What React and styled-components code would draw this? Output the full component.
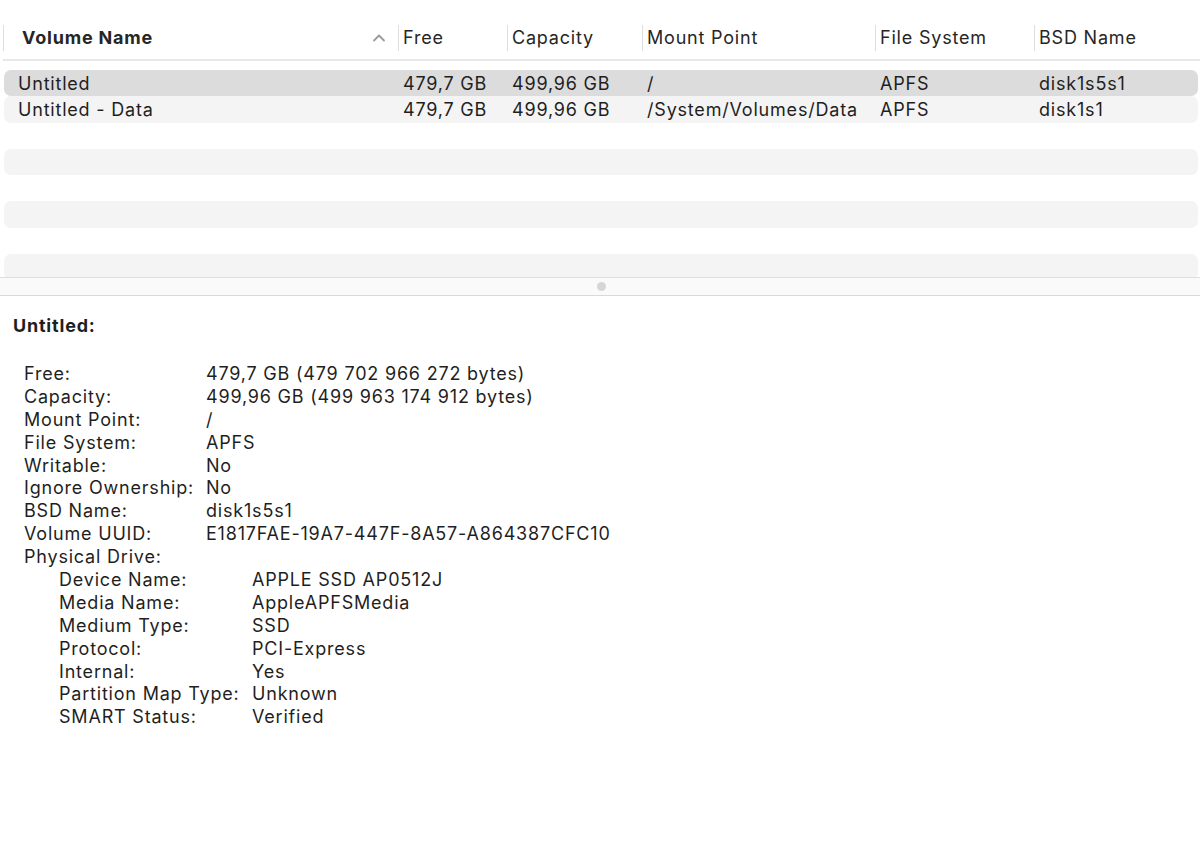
import styled, { createGlobalStyle } from 'styled-components'

const columns = [
  { key: 'name', label: 'Volume Name', sorted: true },
  { key: 'free', label: 'Free' },
  { key: 'capacity', label: 'Capacity' },
  { key: 'mount', label: 'Mount Point' },
  { key: 'fs', label: 'File System' },
  { key: 'bsd', label: 'BSD Name' },
]

const volumes = [
  { name: 'Untitled', free: '479,7 GB', capacity: '499,96 GB', mount: '/', fs: 'APFS', bsd: 'disk1s5s1' },
  { name: 'Untitled - Data', free: '479,7 GB', capacity: '499,96 GB', mount: '/System/Volumes/Data', fs: 'APFS', bsd: 'disk1s1' },
]

const details = [
  ['Free:', '479,7 GB (479 702 966 272 bytes)'],
  ['Capacity:', '499,96 GB (499 963 174 912 bytes)'],
  ['Mount Point:', '/'],
  ['File System:', 'APFS'],
  ['Writable:', 'No'],
  ['Ignore Ownership:', 'No'],
  ['BSD Name:', 'disk1s5s1'],
  ['Volume UUID:', 'E1817FAE-19A7-447F-8A57-A864387CFC10'],
]

const drive = [
  ['Device Name:', 'APPLE SSD AP0512J'],
  ['Media Name:', 'AppleAPFSMedia'],
  ['Medium Type:', 'SSD'],
  ['Protocol:', 'PCI-Express'],
  ['Internal:', 'Yes'],
  ['Partition Map Type:', 'Unknown'],
  ['SMART Status:', 'Verified'],
]

const EMPTY_ROWS = 6

export default function App() {
  return (
    <>
      <GlobalStyle />
      <Window>
        <TableArea>
          <HeaderRow>
            {columns.map((c, i) => (
              <HeaderCell key={c.key} first={i === 0} sorted={c.sorted}>
                <span>{c.label}</span>
                {c.sorted && (
                  <Chevron viewBox="0 0 14 10">
                    <path d="M2 7.5 L7 2.5 L12 7.5" />
                  </Chevron>
                )}
              </HeaderCell>
            ))}
          </HeaderRow>
          <Rows>
            {volumes.map((v, i) => (
              <Row key={v.bsd} selected={i === 0} striped={i % 2 === 1}>
                {columns.map((c, j) => (
                  <Cell key={c.key} first={j === 0}>{v[c.key]}</Cell>
                ))}
              </Row>
            ))}
            {Array.from({ length: EMPTY_ROWS }).map((_, i) => (
              <Row key={i} striped={(i + volumes.length) % 2 === 1} />
            ))}
          </Rows>
        </TableArea>
        <Splitter>
          <Grip />
        </Splitter>
        <Detail>
          <Title>Untitled:</Title>
          <InfoList>
            {details.map(([k, v]) => (
              <InfoRow key={k}>
                <Label>{k}</Label>
                <Value>{v}</Value>
              </InfoRow>
            ))}
            <InfoRow>
              <Label>Physical Drive:</Label>
            </InfoRow>
            <Nested>
              {drive.map(([k, v]) => (
                <InfoRow key={k} nested>
                  <Label>{k}</Label>
                  <Value>{v}</Value>
                </InfoRow>
              ))}
            </Nested>
          </InfoList>
        </Detail>
      </Window>
    </>
  )
}

const GlobalStyle = createGlobalStyle`
  html, body {
    margin: 0;
    padding: 0;
    background: #ffffff;
  }
  body {
    font-family: Inter, "Liberation Sans", sans-serif;
    font-size: 18px;
    letter-spacing: 0.8px;
    color: #1f1f1f;
    -webkit-font-smoothing: antialiased;
  }
`

const Window = styled.div`
  width: 1200px;
  height: 850px;
  display: flex;
  flex-direction: column;
  background: #ffffff;
  overflow: hidden;
`

const TableArea = styled.div`
  height: 277px;
  overflow: hidden;
  padding-top: 16px;
  box-sizing: border-box;
`

const HeaderRow = styled.div`
  display: grid;
  grid-template-columns: 395px 109px 135px 233px 159px 1fr;
  margin-left: 3px;
  height: 43px;
  align-items: center;
  border-bottom: 2px solid #e8e8e8;
  margin-bottom: 9px;
`

const HeaderCell = styled.div`
  display: flex;
  align-items: center;
  justify-content: space-between;
  height: 26px;
  border-left: 1px solid #dedede;
  padding-left: ${p => (p.first ? '18px' : '4px')};
  padding-right: 12px;
  font-weight: ${p => (p.sorted ? 700 : 400)};
  color: #262626;
  white-space: nowrap;
`

const Chevron = styled.svg`
  width: 14px;
  height: 10px;
  fill: none;
  stroke: #9a9a9a;
  stroke-width: 1.8;
  stroke-linecap: round;
  stroke-linejoin: round;
`

const Rows = styled.div`
  display: flex;
  flex-direction: column;
  padding: 0 2px 0 4px;
`

const Row = styled.div`
  display: grid;
  grid-template-columns: 394px 109px 135px 233px 159px 1fr;
  height: 26.3px;
  flex-shrink: 0;
  align-items: center;
  border-radius: 7px;
  background: ${p => (p.selected ? '#dcdcdc' : p.striped ? '#f4f4f4' : 'transparent')};
  color: #1f1f1f;
`

const Cell = styled.div`
  padding-left: ${p => (p.first ? '14px' : '5px')};
  white-space: nowrap;
  overflow: hidden;
`

const Splitter = styled.div`
  height: 17px;
  background: #fafafa;
  border-top: 1px solid #dedede;
  border-bottom: 1px solid #dadada;
  display: flex;
  align-items: center;
  justify-content: center;
`

const Grip = styled.div`
  width: 9px;
  height: 9px;
  border-radius: 50%;
  background: #d6d6d6;
  margin-left: 3px;
`

const Detail = styled.div`
  padding: 19px 0 0 13px;
`

const Title = styled.div`
  font-weight: 700;
  height: 22px;
  line-height: 22px;
  margin-bottom: 26px;
`

const InfoList = styled.div`
  display: flex;
  flex-direction: column;
  padding-left: 11px;
`

const Nested = styled.div`
  display: flex;
  flex-direction: column;
  padding-left: 35px;
`

const InfoRow = styled.div`
  display: grid;
  grid-template-columns: ${p => (p.nested ? '193px' : '182px')} 1fr;
  height: 22.9px;
  line-height: 22.9px;
  white-space: nowrap;
`

const Label = styled.div`
  color: #1f1f1f;
`

const Value = styled.div`
  color: #1f1f1f;
`
